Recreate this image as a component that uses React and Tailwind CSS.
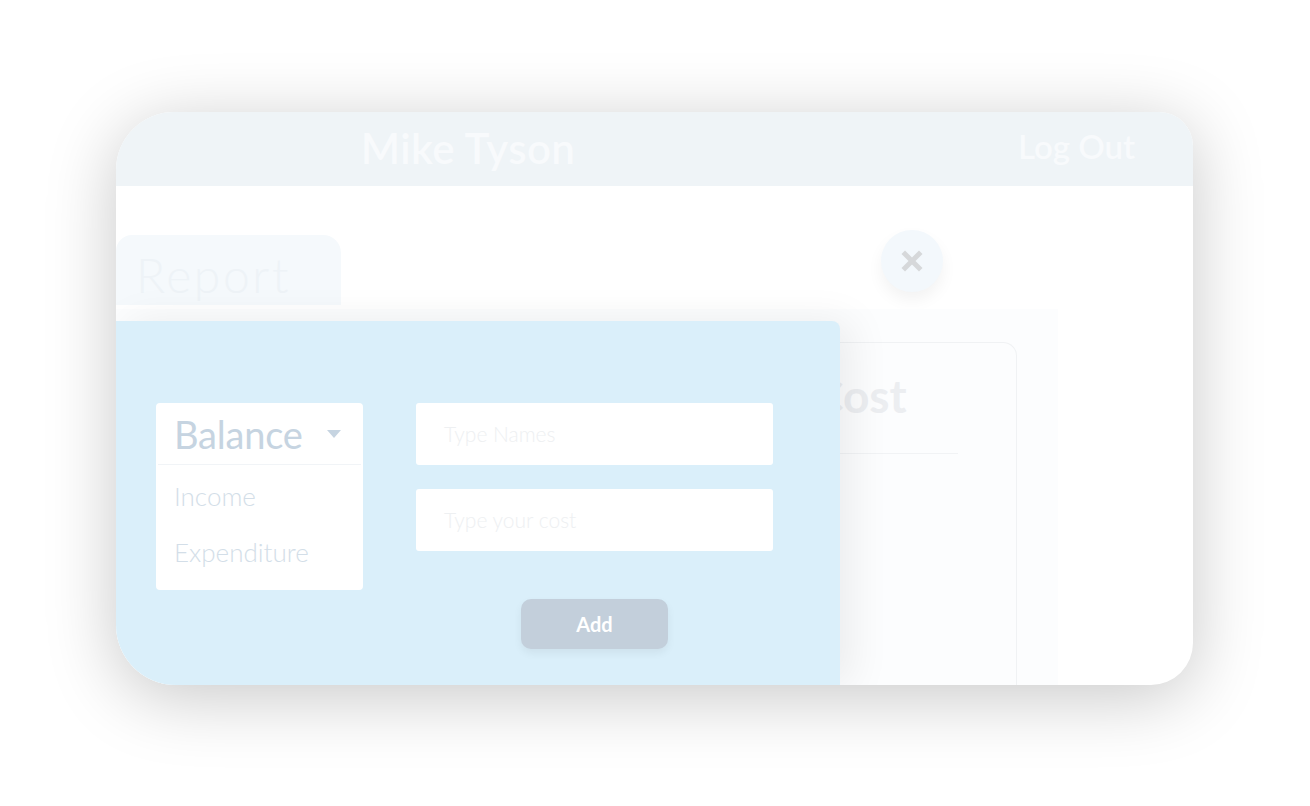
import React from 'react';

const FONT = { fontFamily: 'Lato, "Noto Sans", sans-serif' };

const CloseIcon = () => (
  <svg width="30" height="30" viewBox="0 0 24 24" fill="none">
    <path d="M5 5L19 19M19 5L5 19" stroke="#d6d8da" strokeWidth="4" strokeLinecap="butt" />
  </svg>
);

const Caret = () => (
  <svg width="14" height="8" viewBox="0 0 14 8">
    <path d="M0 0H14L7 8Z" fill="#c6d4e1" />
  </svg>
);

const Dropdown = () => (
  <div className="w-[207px] h-[187px] bg-white rounded-[4px] flex flex-col">
    <div className="h-[62px] mx-[2px] flex items-center justify-between pl-[16px] pr-[20px] border-b border-[#f1f4f7]">
      <span className="text-[38px] leading-none text-[#c6d4e1] tracking-[-0.2px]">Balance</span>
      <Caret />
    </div>
    <div className="flex flex-col pl-[18px] pt-[18px] gap-[30px] text-[26px] leading-none font-light text-[#d3dee8]">
      <span>Income</span>
      <span>Expenditure</span>
    </div>
  </div>
);

const Field = ({ placeholder }) => (
  <div className="w-[357px] h-[62px] bg-white rounded-[3px] flex items-center pl-[28px]">
    <span className="text-[21px] font-light text-[#eef0f2]">{placeholder}</span>
  </div>
);

export default function App() {
  return (
    <div className="w-[1310px] h-[806px] bg-white overflow-hidden pl-[116px] pt-[112px]" style={FONT}>
      <div className="w-[1077px] h-[573px] bg-white rounded-tl-[58px] rounded-tr-[34px] rounded-br-[42px] rounded-bl-[60px] overflow-hidden flex flex-col shadow-[0_12px_70px_rgba(0,0,0,0.22)]">
        {/* Header */}
        <div className="h-[74px] shrink-0 bg-[#eff4f7] flex items-center">
          <div className="w-[704px] flex justify-center">
            <span className="text-[42px] font-semibold text-[#f8fafc] tracking-[0.4px] -mt-[2px]">Mike Tyson</span>
          </div>
          <span className="ml-[198px] text-[33px] font-semibold text-[#f8fafc] -mt-[4px]">Log Out</span>
        </div>

        {/* Top body */}
        <div className="h-[123px] shrink-0 flex">
          <div className="mt-[49px] w-[225px] h-[70px] bg-[#f5f9fc] rounded-tl-[16px] rounded-tr-[18px] pl-[20px] flex items-end">
            <span className="text-[48px] font-light leading-none pb-[6px] text-[#eef3f7] tracking-[2.6px]">Report</span>
          </div>
          <div className="ml-[540px] mt-[44px] w-[62px] h-[62px] rounded-full bg-[#f3f8fc] flex items-center justify-center shadow-[0_8px_16px_rgba(0,0,0,0.05)]">
            <CloseIcon />
          </div>
        </div>

        {/* Lower body */}
        <div className="relative flex-1 flex">
          <div className="w-[942px] h-full bg-[#fcfdfe] flex pt-[33px]">
            <div className="ml-[664px] w-[237px] h-full bg-[#fcfdfe] border-t border-r border-[#f0f2f4] rounded-tr-[14px] pt-[30px]">
              <div className="pl-[33px] text-[46px] font-bold leading-none text-[#eceef1]">Cost</div>
              <div className="mt-[34px] ml-[20px] w-[158px] h-px bg-[#f1f3f5]" />
            </div>
          </div>

          {/* Add form panel */}
          <div className="absolute left-0 top-[12px] bottom-0 w-[724px] bg-[#daeffa] rounded-tr-[8px] shadow-[12px_0_40px_rgba(0,0,0,0.07)] flex pl-[40px] pt-[82px]">
            <Dropdown />
            <div className="ml-[53px] flex flex-col items-center">
              <div className="flex flex-col gap-[24px]">
                <Field placeholder="Type Names" />
                <Field placeholder="Type your cost" />
              </div>
              <div className="mt-[48px] w-[147px] h-[50px] rounded-[10px] bg-[#c3cfdb] flex items-center justify-center shadow-[0_4px_8px_rgba(0,0,0,0.06)]">
                <span className="text-[20px] font-bold text-white">Add</span>
              </div>
            </div>
          </div>
        </div>
      </div>
    </div>
  );
}
